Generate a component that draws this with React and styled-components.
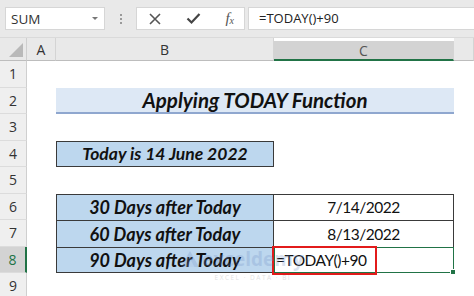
import React from 'react';
import styled, { createGlobalStyle } from 'styled-components';

const GlobalStyle = createGlobalStyle`
  body {
    margin: 0;
    background: #ffffff;
    font-family: "Open Sans", "Liberation Sans", sans-serif;
    overflow: hidden;
  }
`;

const ROW_H = 26.5;

function App() {
  return (
    <Page>
      <GlobalStyle />
      <Toolbar>
        <NameBox>
          <span>SUM</span>
          <Caret />
        </NameBox>
        <Grip>
          <i />
          <i />
          <i />
        </Grip>
        <ButtonBox>
          <svg width="14" height="14" viewBox="0 0 14 14">
            <path d="M2 2 L12 12 M12 2 L2 12" stroke="#555" strokeWidth="1.6" fill="none" />
          </svg>
          <svg width="15" height="13" viewBox="0 0 15 13">
            <path d="M1.5 6.5 L5.5 10.5 L13.5 2" stroke="#444" strokeWidth="2.2" fill="none" />
          </svg>
          <Fx>
            f<sub>x</sub>
          </Fx>
        </ButtonBox>
        <FormulaBox>=TODAY()+90</FormulaBox>
      </Toolbar>

      <Sheet>
        <Corner>
          <Triangle />
        </Corner>
        <ColHead>A</ColHead>
        <ColHead>B</ColHead>
        <ColHead selected>C</ColHead>
        <ColHead />

        {/* row 1 */}
        <RowHead>1</RowHead>
        <Blank span={4} />

        {/* row 2 */}
        <RowHead>2</RowHead>
        <Blank />
        <Title>Applying TODAY Function</Title>
        <Blank />

        {/* row 3 */}
        <RowHead>3</RowHead>
        <Blank span={4} />

        {/* row 4 */}
        <RowHead>4</RowHead>
        <Blank />
        <Label boxed>Today is 14 June 2022</Label>
        <Blank span={2} />

        {/* row 5 */}
        <RowHead>5</RowHead>
        <Blank span={4} />

        {/* rows 6-8 */}
        <RowHead>6</RowHead>
        <Blank />
        <Label>30 Days after Today</Label>
        <Value>7/14/2022</Value>
        <Blank />

        <RowHead>7</RowHead>
        <Blank />
        <Label>60 Days after Today</Label>
        <Value>8/13/2022</Value>
        <Blank />

        <RowHead active>8</RowHead>
        <Blank />
        <Label last>90 Days after Today</Label>
        <Value active>
          <Mark>=TODAY()+90</Mark>
          <Handle />
        </Value>
        <Blank />

        <RowHead>9</RowHead>
        <Blank span={4} />

        <Watermark>
          <svg width="20" height="18" viewBox="0 0 22 20">
            <path d="M1 19 L11 1 L21 19 Z" fill="#6f8fc6" />
            <path d="M6 19 L11 10 L16 19 Z" fill="#a9bde0" />
          </svg>
          <WmText>
            <strong>exceldemy</strong>
            <small>EXCEL · DATA · BI</small>
          </WmText>
        </Watermark>
      </Sheet>
    </Page>
  );
}

const Page = styled.div`
  width: 474px;
  height: 296px;
  overflow: hidden;
  background: #ffffff;
`;

const Toolbar = styled.div`
  display: flex;
  align-items: center;
  height: 38px;
  padding: 0 0 0 5px;
  box-sizing: border-box;
  background: #e9e9e9;
  border-bottom: 1px solid #dadada;
`;

const NameBox = styled.div`
  display: flex;
  align-items: center;
  justify-content: space-between;
  width: 100px;
  height: 23px;
  padding: 0 6px 0 5px;
  box-sizing: border-box;
  background: #ffffff;
  border: 1px solid #d6d6d6;
  font-size: 13.5px;
  color: #333;
`;

const Caret = styled.span`
  width: 0;
  height: 0;
  border-left: 3px solid transparent;
  border-right: 3px solid transparent;
  border-top: 3px solid #777;
`;

const Grip = styled.div`
  display: flex;
  flex-direction: column;
  gap: 2px;
  margin: 0 14px 0 15px;

  i {
    width: 2px;
    height: 2px;
    background: #9a9a9a;
  }
`;

const ButtonBox = styled.div`
  display: flex;
  align-items: center;
  justify-content: space-between;
  width: 109px;
  height: 23px;
  padding: 0 10px 0 11px;
  box-sizing: border-box;
  background: #ffffff;
  border: 1px solid #d6d6d6;
`;

const Fx = styled.span`
  font-family: "Liberation Serif", serif;
  font-style: italic;
  font-size: 15px;
  color: #555;
  line-height: 1;

  sub {
    font-size: 10px;
    vertical-align: -1px;
  }
`;

const FormulaBox = styled.div`
  flex: 1;
  height: 23px;
  margin-left: 3px;
  padding-left: 10px;
  box-sizing: border-box;
  background: #ffffff;
  border: 1px solid #d6d6d6;
  border-right: none;
  font-size: 13px;
  line-height: 21px;
  color: #222;
`;

const Sheet = styled.div`
  position: relative;
  display: grid;
  grid-template-columns: 27px 29px 218px 180px 1fr;
  grid-template-rows: 23px repeat(9, ${ROW_H}px);
  font-family: "Lato", "Open Sans", sans-serif;
`;

const Corner = styled.div`
  position: relative;
  background: #e9e9e9;
  border-right: 1px solid #cfcfcf;
  border-bottom: 1px solid #bdbdbd;
`;

const Triangle = styled.div`
  position: absolute;
  right: 3px;
  bottom: 3px;
  width: 0;
  height: 0;
  border-left: 14px solid transparent;
  border-bottom: 14px solid #b9b9b9;
`;

const ColHead = styled.div`
  display: flex;
  align-items: center;
  justify-content: center;
  margin-top: ${p => (p.selected ? '3px' : '0')};
  background: ${p => (p.selected ? '#d3d3d3' : '#e9e9e9')};
  border-right: 1px solid #d4d4d4;
  border-bottom: ${p => (p.selected ? '2px solid #217346' : '1px solid #bdbdbd')};
  font-family: "Open Sans", sans-serif;
  font-size: 14px;
  color: ${p => (p.selected ? '#555' : '#333')};
`;

const RowHead = styled.div`
  display: flex;
  align-items: center;
  justify-content: center;
  background: ${p => (p.active ? '#d3d3d3' : '#efefef')};
  border-right: ${p => (p.active ? '2px solid #217346' : '1px solid #cfcfcf')};
  border-bottom: 1px solid #dcdcdc;
  font-family: "Open Sans", sans-serif;
  font-size: 14px;
  color: ${p => (p.active ? '#217346' : '#333')};
`;

const Blank = styled.div`
  grid-column: span ${p => p.span || 1};
  background: #ffffff;
`;

const Title = styled.div`
  grid-column: span 2;
  display: flex;
  align-items: center;
  justify-content: center;
  background: #dde8f5;
  border-bottom: 2px solid #8fa7cf;
  font-size: 20.5px;
  font-weight: 700;
  font-style: italic;
  color: #111;
`;

const Label = styled.div`
  display: flex;
  align-items: center;
  justify-content: center;
  background: #bdd7ee;
  border: 1px solid #3a3a3a;
  border-top: ${p => (p.boxed ? '1px solid #3a3a3a' : 'none')};
  border-bottom: ${p => (p.boxed || p.last ? '1px solid #3a3a3a' : 'none')};
  box-sizing: border-box;
  font-size: ${p => (p.boxed ? '17.5px' : '18px')};
  font-weight: 700;
  font-style: italic;
  color: #111;
  ${Blank} + & {
    border-top: 1px solid #3a3a3a;
  }
`;

const Value = styled.div`
  position: relative;
  display: flex;
  align-items: center;
  justify-content: center;
  background: #ffffff;
  border-right: 1px solid #3a3a3a;
  border-top: 1px solid #3a3a3a;
  ${p =>
    p.active &&
    `
    border: 1.5px solid #217346;
    justify-content: flex-start;
  `}
  box-sizing: border-box;
  font-size: 15.5px;
  letter-spacing: -0.5px;
  color: #111;
`;

const Mark = styled.span`
  position: absolute;
  left: -3px;
  top: -2px;
  width: 105px;
  height: 29px;
  padding-left: 2px;
  box-sizing: border-box;
  border: 2px solid #e21b1b;
  display: flex;
  align-items: center;
  font-size: 15.5px;
  letter-spacing: -0.5px;
  color: #111;
`;

const Handle = styled.span`
  position: absolute;
  right: -3px;
  bottom: -3px;
  width: 4px;
  height: 4px;
  background: #217346;
  border: 1px solid #fff;
`;

const Watermark = styled.div`
  position: absolute;
  left: 180px;
  top: 212px;
  display: flex;
  align-items: flex-start;
  gap: 2px;
  opacity: 0.25;
  pointer-events: none;
`;

const WmText = styled.div`
  display: flex;
  flex-direction: column;
  align-items: center;
  line-height: 1;

  strong {
    font-family: "Open Sans", sans-serif;
    font-size: 19px;
    font-weight: 700;
    color: #6f8fc6;
  }

  small {
    margin-top: 6px;
    font-family: "Open Sans", sans-serif;
    font-size: 6.5px;
    letter-spacing: 1.5px;
    color: #888;
  }
`;

export default App;
